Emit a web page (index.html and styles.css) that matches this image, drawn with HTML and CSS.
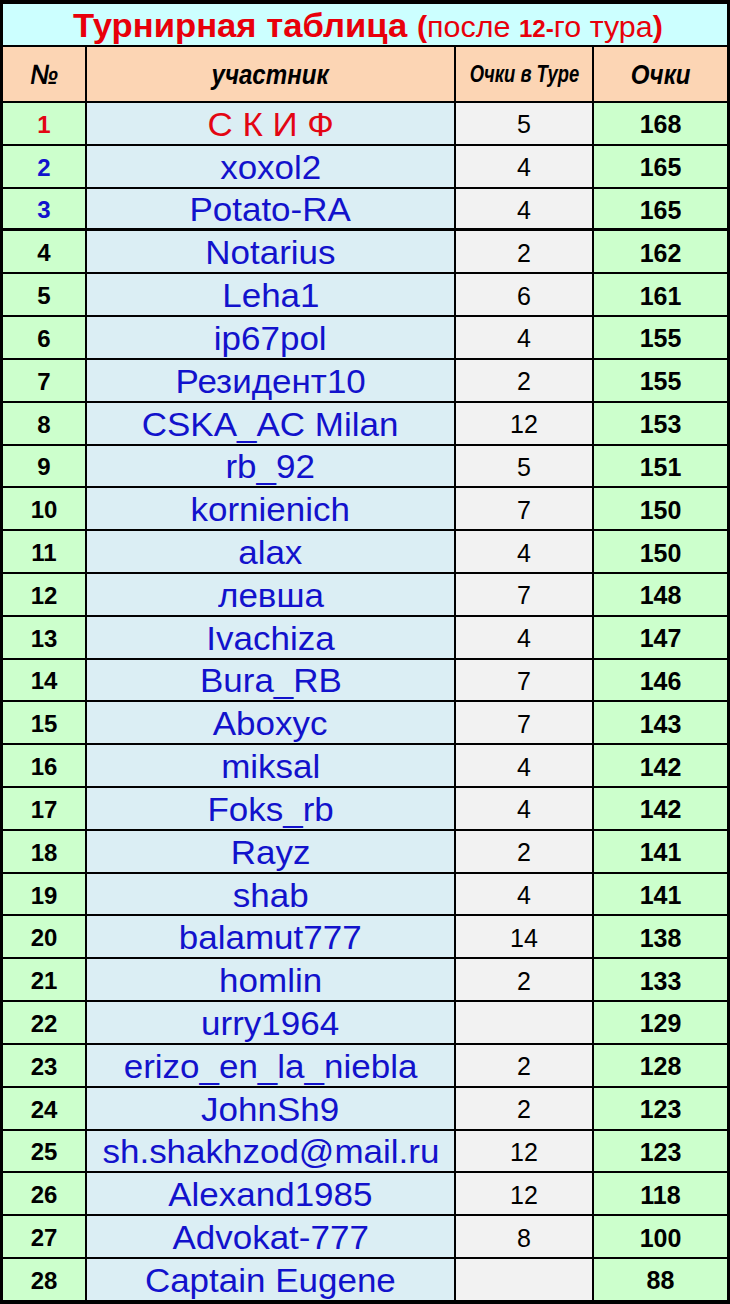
FILE: index.html
```html
<!DOCTYPE html>
<html lang="ru">
<head>
<meta charset="utf-8">
<title>Турнирная таблица</title>
<link rel="stylesheet" href="styles.css">
</head>
<body>
<div class="board">
  <div class="title"><span class="tt"><b>Турнирная таблица</b> <span class="sub"><b>(</b>после <b class="n">12-</b>го тура<b>)</b></span></span></div>
  <div class="row head">
    <div class="c1"><span class="hx">№</span></div>
    <div class="c2"><span class="hx">участник</span></div>
    <div class="c3"><span class="hx small">Очки в Туре</span></div>
    <div class="c4"><span class="hx">Очки</span></div>
  </div>
  <div class="row"><div class="c1 red">1</div><div class="c2"><span class="nm red">С К И Ф</span></div><div class="c3">5</div><div class="c4">168</div></div>
  <div class="row"><div class="c1 blue">2</div><div class="c2"><span class="nm">xoxol2</span></div><div class="c3">4</div><div class="c4">165</div></div>
  <div class="row sep"><div class="c1 blue">3</div><div class="c2"><span class="nm">Potato-RA</span></div><div class="c3">4</div><div class="c4">165</div></div>
  <div class="row"><div class="c1">4</div><div class="c2"><span class="nm">Notarius</span></div><div class="c3">2</div><div class="c4">162</div></div>
  <div class="row"><div class="c1">5</div><div class="c2"><span class="nm">Leha1</span></div><div class="c3">6</div><div class="c4">161</div></div>
  <div class="row"><div class="c1">6</div><div class="c2"><span class="nm">ip67pol</span></div><div class="c3">4</div><div class="c4">155</div></div>
  <div class="row"><div class="c1">7</div><div class="c2"><span class="nm">Резидент10</span></div><div class="c3">2</div><div class="c4">155</div></div>
  <div class="row"><div class="c1">8</div><div class="c2"><span class="nm">CSKA_AC Milan</span></div><div class="c3">12</div><div class="c4">153</div></div>
  <div class="row"><div class="c1">9</div><div class="c2"><span class="nm">rb_92</span></div><div class="c3">5</div><div class="c4">151</div></div>
  <div class="row"><div class="c1">10</div><div class="c2"><span class="nm">kornienich</span></div><div class="c3">7</div><div class="c4">150</div></div>
  <div class="row"><div class="c1">11</div><div class="c2"><span class="nm">alax</span></div><div class="c3">4</div><div class="c4">150</div></div>
  <div class="row"><div class="c1">12</div><div class="c2"><span class="nm">левша</span></div><div class="c3">7</div><div class="c4">148</div></div>
  <div class="row"><div class="c1">13</div><div class="c2"><span class="nm">Ivachiza</span></div><div class="c3">4</div><div class="c4">147</div></div>
  <div class="row"><div class="c1">14</div><div class="c2"><span class="nm">Bura_RB</span></div><div class="c3">7</div><div class="c4">146</div></div>
  <div class="row"><div class="c1">15</div><div class="c2"><span class="nm">Aboxyc</span></div><div class="c3">7</div><div class="c4">143</div></div>
  <div class="row"><div class="c1">16</div><div class="c2"><span class="nm">miksal</span></div><div class="c3">4</div><div class="c4">142</div></div>
  <div class="row"><div class="c1">17</div><div class="c2"><span class="nm">Foks_rb</span></div><div class="c3">4</div><div class="c4">142</div></div>
  <div class="row"><div class="c1">18</div><div class="c2"><span class="nm">Rayz</span></div><div class="c3">2</div><div class="c4">141</div></div>
  <div class="row"><div class="c1">19</div><div class="c2"><span class="nm">shab</span></div><div class="c3">4</div><div class="c4">141</div></div>
  <div class="row"><div class="c1">20</div><div class="c2"><span class="nm">balamut777</span></div><div class="c3">14</div><div class="c4">138</div></div>
  <div class="row"><div class="c1">21</div><div class="c2"><span class="nm">homlin</span></div><div class="c3">2</div><div class="c4">133</div></div>
  <div class="row"><div class="c1">22</div><div class="c2"><span class="nm">urry1964</span></div><div class="c3"></div><div class="c4">129</div></div>
  <div class="row"><div class="c1">23</div><div class="c2"><span class="nm">erizo_en_la_niebla</span></div><div class="c3">2</div><div class="c4">128</div></div>
  <div class="row"><div class="c1">24</div><div class="c2"><span class="nm">JohnSh9</span></div><div class="c3">2</div><div class="c4">123</div></div>
  <div class="row"><div class="c1">25</div><div class="c2"><span class="nm">sh.shakhzod@mail.ru</span></div><div class="c3">12</div><div class="c4">123</div></div>
  <div class="row"><div class="c1">26</div><div class="c2"><span class="nm">Alexand1985</span></div><div class="c3">12</div><div class="c4">118</div></div>
  <div class="row"><div class="c1">27</div><div class="c2"><span class="nm">Advokat-777</span></div><div class="c3">8</div><div class="c4">100</div></div>
  <div class="row"><div class="c1">28</div><div class="c2"><span class="nm">Captain Eugene</span></div><div class="c3"></div><div class="c4">88</div></div>
</div>
</body>
</html>
```

FILE: styles.css
```css
html, body {
  margin: 0;
  padding: 0;
  background: #000;
}

.board {
  width: 730px;
  height: 1304px;
  box-sizing: border-box;
  padding: 4px 3px 3px 3px;
  background: #000;
  display: grid;
  grid-template-columns: 82px 367px 136px 133px;
  grid-template-rows: 41px 54px;
  grid-auto-rows: 40.82px;
  gap: 2px;
  font-family: "Liberation Sans", Arial, sans-serif;
}

.row {
  display: contents;
}

.row > div {
  display: flex;
  align-items: center;
  justify-content: center;
  overflow: hidden;
  white-space: nowrap;
  padding-top: 3px;
}

.row.sep > div {
  border-bottom: 1px solid #000;
}

.title {
  grid-column: 1 / -1;
  background: #ccffff;
  color: #e8000b;
  display: flex;
  align-items: center;
  justify-content: center;
  white-space: nowrap;
  padding-left: 6px;
}

.tt {
  display: inline-block;
  font-size: 33px;
  transform: scaleX(1.05);
  position: relative;
  top: 1px;
}

.tt b {
  font-weight: 700;
}

.sub {
  font-size: 29px;
  font-weight: 400;
}

.sub .n {
  font-size: 23px;
}

.head > div {
  background: #fcd5b4;
  padding-top: 1px;
}

.hx {
  display: inline-block;
  font-weight: 700;
  font-style: italic;
  font-size: 28px;
  color: #000;
  transform: scaleX(0.86);
}

.hx.small {
  font-size: 23px;
  transform: scaleX(0.8);
}

.c1 {
  background: #ccffcc;
  font-weight: 700;
  font-size: 24px;
  color: #000;
}

.c2 {
  background: #dbeef4;
}

.c3 {
  background: #f2f2f2;
  font-size: 25px;
  color: #000;
}

.c4 {
  background: #ccffcc;
  font-weight: 700;
  font-size: 25px;
  color: #000;
}

.head .c1, .head .c2, .head .c3, .head .c4 {
  background: #fcd5b4;
}

.nm {
  display: inline-block;
  font-size: 33px;
  color: #1212cc;
  transform: scaleX(1.06);
}

.red {
  color: #e30613;
}

.nm.red {
  color: #e30613;
}

.blue {
  color: #1212cc;
}
```
